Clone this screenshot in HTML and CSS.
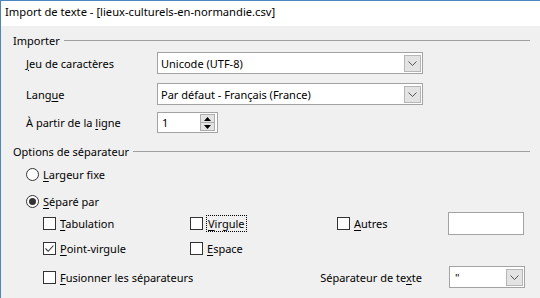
FILE: index.html
```html
<!DOCTYPE html>
<html lang="fr">
<head>
<meta charset="utf-8">
<title>Import de texte</title>
<link rel="stylesheet" href="styles.css">
</head>
<body>
<div class="window">
  <div class="titlebar">Import de texte - [lieux-culturels-en-normandie.csv]</div>
  <div class="content">
    <div class="group-head"><span>Importer</span><span class="rule"></span></div>
    <div class="form">
      <div class="row r1">
        <span class="label"><u>J</u>eu de caractères</span>
        <div class="combo wide"><span class="value">Unicode (UTF-8)</span><span class="drop"><svg width="9" height="5" viewBox="0 0 9 5"><path d="M0.5 0.5 L4.5 4.5 L8.5 0.5" fill="none" stroke="#555" stroke-width="1"/></svg></span></div>
      </div>
      <div class="row r2">
        <span class="label">Lang<u>u</u>e</span>
        <div class="combo wide"><span class="value">Par défaut - Français (France)</span><span class="drop"><svg width="9" height="5" viewBox="0 0 9 5"><path d="M0.5 0.5 L4.5 4.5 L8.5 0.5" fill="none" stroke="#555" stroke-width="1"/></svg></span></div>
      </div>
      <div class="row r3">
        <span class="label">À partir de la <u>l</u>igne</span>
        <div class="spin"><span class="value">1</span>
          <span class="spin-btns">
            <span class="sbtn"><svg width="7" height="4" viewBox="0 0 7 4"><path d="M3.5 0 L7 4 L0 4 Z" fill="#000"/></svg></span>
            <span class="sbtn"><svg width="7" height="4" viewBox="0 0 7 4"><path d="M0 0 L7 0 L3.5 4 Z" fill="#000"/></svg></span>
          </span>
        </div>
      </div>
    </div>

    <div class="group-head g2"><span>Options de séparateur</span><span class="rule"></span></div>
    <div class="radios">
      <div class="opt"><span class="radio"></span><span><u>L</u>argeur fixe</span></div>
      <div class="opt o2"><span class="radio on"></span><span><u>S</u>éparé par</span></div>
    </div>
    <div class="checks">
      <div class="opt"><span class="box"></span><span><u>T</u>abulation</span></div>
      <div class="opt"><span class="box"></span><span class="focus"><u>V</u>irgule</span></div>
      <div class="opt"><span class="box"></span><span><u>A</u>utres</span></div>
      <div class="field"></div>

      <div class="opt"><span class="box"><svg width="11" height="11" viewBox="0 0 11 11"><path d="M1.5 5.5 L4.2 8.3 L9.5 2.5" fill="none" stroke="#333" stroke-width="1.1"/></svg></span><span><u>P</u>oint-virgule</span></div>
      <div class="opt"><span class="box"></span><span><u>E</u>space</span></div>
    </div>
    <div class="last-row">
      <div class="opt"><span class="box"></span><span><u>F</u>usionner les séparateurs</span></div>
      <div class="tsep-wrap">
        <span class="tsep">Séparateur de te<u>x</u>te</span>
        <div class="combo small"><span class="value">"</span><span class="drop"><svg width="9" height="5" viewBox="0 0 9 5"><path d="M0.5 0.5 L4.5 4.5 L8.5 0.5" fill="none" stroke="#555" stroke-width="1"/></svg></span></div>
      </div>
    </div>
  </div>
</div>
</body>
</html>
```

FILE: styles.css
```css
* { box-sizing: border-box; }
html, body { margin: 0; padding: 0; }
body {
  width: 540px;
  height: 298px;
  overflow: hidden;
  background: #f0f0f0;
  font-family: "Noto Sans", "Open Sans", sans-serif;
  font-size: 11px;
  color: #000;
}
u { text-decoration: underline; text-underline-offset: 2px; text-decoration-thickness: 1px; }
.window {
  width: 540px;
  height: 298px;
  border-left: 1px solid #4a86c0;
  border-top: 1px solid #4a86c0;
  background: #f0f0f0;
}
.titlebar {
  height: 25px;
  background: #fff;
  line-height: 22px;
  padding-left: 4px;
  font-size: 11.2px;
}
.content {
  padding: 6px 10px 0 12px;
}
.group-head {
  display: flex;
  align-items: center;
  height: 16px;
  gap: 4px;
}
.group-head .rule {
  flex: 1;
  height: 1px;
  background: #a0a0a0;
}
.form { padding-left: 13px; margin-top: 4px; }
.row {
  display: flex;
  align-items: center;
}
.row .label { width: 131px; }
.r2 { margin-top: 9px; }
.r3 { margin-top: 7px; }
.combo {
  display: flex;
  align-items: center;
  height: 22px;
  border: 1px solid #a3a3a3;
  background: #fff;
  padding: 2px 1px 1px 3px;
}
.combo.wide { width: 266px; }
.combo .value { flex: 1; white-space: nowrap; overflow: hidden; }
.drop {
  width: 17px;
  height: 17px;
  border: 1px solid #b6b6b6;
  background: #e3e3e3;
  display: flex;
  align-items: center;
  justify-content: center;
}
.spin {
  width: 61px;
  height: 21px;
  border: 1px solid #a3a3a3;
  background: #fff;
  display: flex;
  align-items: center;
  padding: 1px 2px 1px 4px;
}
.spin .value { flex: 1; }
.spin-btns {
  width: 15px;
  height: 17px;
  display: flex;
  flex-direction: column;
  border: 1px solid #adadad;
  background: #e3e3e3;
}
.sbtn {
  flex: 1;
  display: flex;
  align-items: center;
  justify-content: center;
}
.sbtn + .sbtn { border-top: 1px solid #adadad; }
.g2 { margin-top: 10px; }
.radios { padding-left: 13px; }
.opt { display: flex; align-items: center; gap: 4px; white-space: nowrap; }
.radios .opt { height: 18px; margin-top: 6px; }
.radios .o2 { margin-top: 9px; }
.radio {
  width: 13px;
  height: 13px;
  border: 1px solid #333;
  border-radius: 50%;
  background: #fff;
  display: flex;
  align-items: center;
  justify-content: center;
}
.radio.on::after {
  content: "";
  width: 7px;
  height: 7px;
  border-radius: 50%;
  background: #333;
}
.checks {
  display: grid;
  grid-template-columns: 147px 147px 111px 76px;
  grid-template-rows: 25px 25px;
  align-items: center;
  padding-left: 30px;
  margin-top: 1px;
}
.box {
  width: 13px;
  height: 13px;
  border: 1px solid #333;
  background: #fff;
  display: flex;
  align-items: center;
  justify-content: center;
}
.focus { outline: 1px dotted #000; outline-offset: 0; padding: 0 1px; }
.field {
  width: 76px;
  height: 23px;
  border: 1px solid #a3a3a3;
  background: #fff;
}
.last-row {
  display: flex;
  align-items: center;
  justify-content: space-between;
  height: 28px;
  margin-top: 2px;
  padding-left: 30px;
  width: 512px;
}
.tsep-wrap { display: flex; align-items: center; gap: 27px; }
.combo.small { width: 76px; height: 22px; padding-left: 5px; }
```
